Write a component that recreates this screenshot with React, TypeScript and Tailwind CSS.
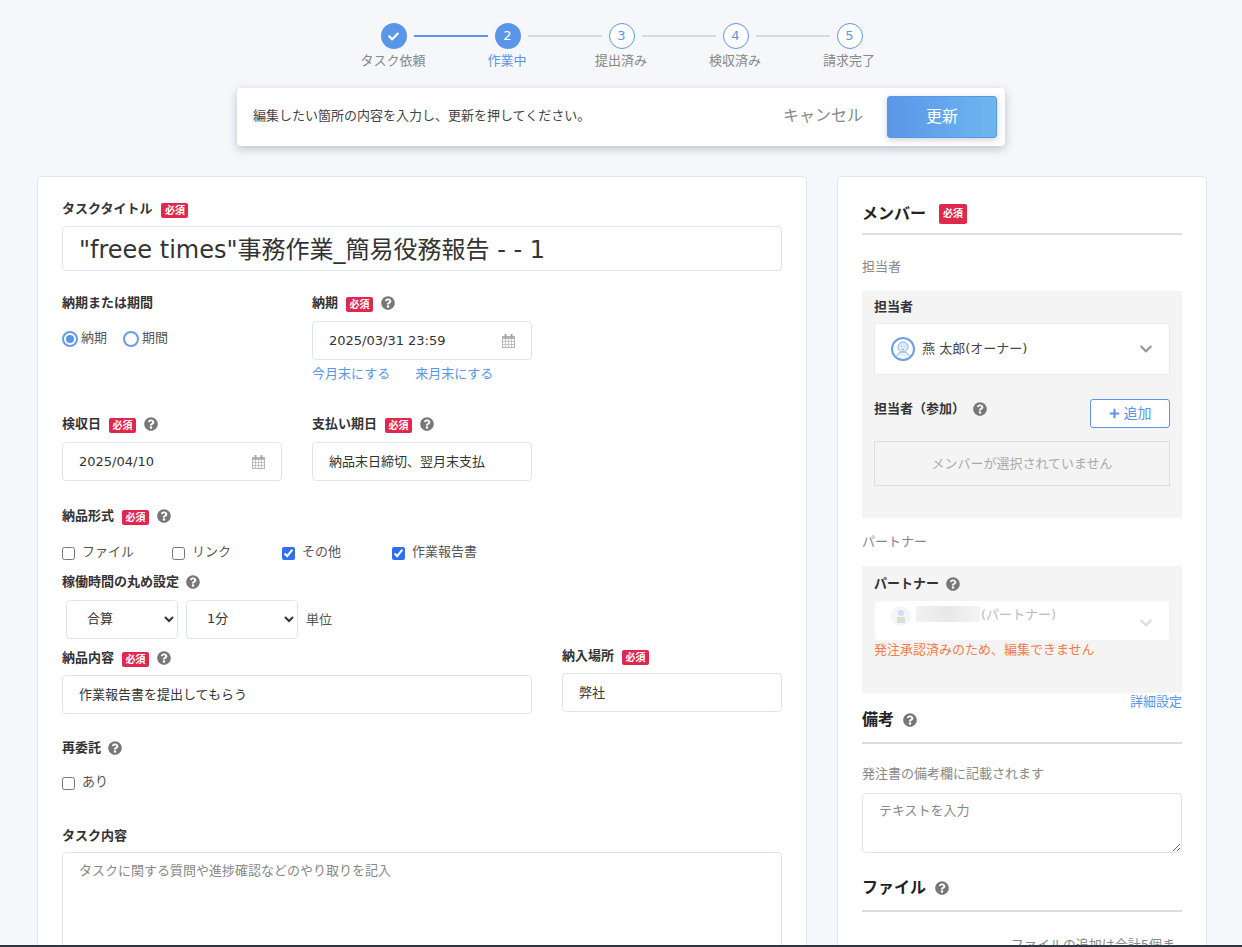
import type { ReactNode } from 'react';
import { FaCheck, FaChevronDown, FaPlus, FaQuestionCircle } from 'react-icons/fa';

const STEPS = ['タスク依頼', '作業中', '提出済み', '検収済み', '請求完了'];

function Help({ className = 'ml-2' }: { className?: string }) {
  return <FaQuestionCircle className={`shrink-0 text-[14px] text-[#777] ${className}`} />;
}

function Required({ large = false, className = 'ml-2' }: { large?: boolean; className?: string }) {
  return (
    <span
      className={
        large
          ? 'ml-[13px] flex h-5 w-7 items-center justify-center rounded-[2px] bg-[#e0284f] text-[10px] font-bold text-white'
          : `mt-[3px] flex h-[15px] w-[27px] items-center justify-center rounded-[2px] bg-[#e0284f] text-[10px] font-bold text-white ${className}`
      }
    >
      必須
    </span>
  );
}

function Label({ children, className = '' }: { children: ReactNode; className?: string }) {
  return (
    <div className={`flex h-5 items-center text-[13px] font-bold text-[#333] ${className}`}>
      {children}
    </div>
  );
}

function CalendarIcon() {
  return (
    <svg width="13" height="14" viewBox="0 0 13 14" className="shrink-0">
      <rect x="0.5" y="2.5" width="12" height="11" fill="#fff" stroke="#b5b5b5" />
      <rect x="0" y="2" width="13" height="3" fill="#b5b5b5" />
      <rect x="2.5" y="0" width="2" height="4" fill="#a8a8a8" />
      <rect x="8.5" y="0" width="2" height="4" fill="#a8a8a8" />
      <path d="M3.5 5v8M6.5 5v8M9.5 5v8M1 7.5h11M1 10.5h11" stroke="#c4c4c4" strokeWidth="1" />
    </svg>
  );
}

function Field({
  value,
  calendar = false,
  className = '',
}: {
  value: string;
  calendar?: boolean;
  className?: string;
}) {
  return (
    <div
      className={`flex h-[39px] items-center justify-between rounded-[4px] border border-[#dfe6ea] bg-white pl-4 pr-4 text-[13px] text-[#333] ${className}`}
    >
      <span>{value}</span>
      {calendar && <CalendarIcon />}
    </div>
  );
}

function Check({ label, checked = false, className = '' }: { label: string; checked?: boolean; className?: string }) {
  return (
    <label className={`flex items-center text-[13px] text-[#555] ${className}`}>
      <input type="checkbox" defaultChecked={checked} className="mt-[2px] h-[13px] w-[13px] accent-[#2f6fed]" />
      <span className="ml-[7px] -mt-[1px]">{label}</span>
    </label>
  );
}

function Radio({ label, checked = false }: { label: string; checked?: boolean }) {
  return (
    <div className="flex items-center text-[13px] text-[#555]">
      <span className="flex h-4 w-4 items-center justify-center rounded-full border-2 border-[#6b9be8] bg-white">
        {checked && <span className="h-2 w-2 rounded-full bg-[#5a96e8]" />}
      </span>
      <span className="ml-[3px] -mt-[3px]">{label}</span>
    </div>
  );
}

function NativeSelect({ value, options }: { value: string; options: string[] }) {
  return (
    <select
      defaultValue={value}
      className="h-[39px] w-[112px] rounded-[4px] border border-[#dfe6ea] bg-white pb-[2px] pl-4 pr-1 text-[13px] text-[#333]"
    >
      {options.map((o) => (
        <option key={o}>{o}</option>
      ))}
    </select>
  );
}

function Heading({ children, tall = false }: { children: ReactNode; tall?: boolean }) {
  return (
    <div
      className={`flex items-center border-b-2 border-[#ddd] text-[16px] font-bold text-[#222] ${
        tall ? 'h-[41px] pb-[5px]' : 'h-[39px] pb-[2px]'
      }`}
    >
      {children}
    </div>
  );
}

function OwnerAvatar() {
  return (
    <svg width="24" height="24" viewBox="0 0 24 24" className="shrink-0">
      <circle cx="12" cy="12" r="11" fill="#fff" stroke="#6a9fe8" strokeWidth="2" />
      <circle cx="12" cy="10" r="5" fill="#dfeafb" stroke="#8fb4ea" strokeWidth="1" />
      <path d="M5.5 19c1.5-3 4-4 6.500-4s5 1 6.500 4" fill="#e6effb" stroke="#8fb4ea" strokeWidth="1" />
      <path d="M10 9.500h.5M13.500 9.500h.5M11 12.500h2" stroke="#6f8fc0" strokeWidth="0.8" />
    </svg>
  );
}

function PartnerAvatar() {
  return (
    <svg width="20" height="20" viewBox="0 0 20 20" className="shrink-0">
      <circle cx="10" cy="10" r="10" fill="#f3f5f9" />
      <circle cx="10" cy="7" r="3" fill="#cfdcf3" />
      <rect x="6" y="11" width="8" height="6" rx="1" fill="#e7dcb8" />
      <rect x="6" y="15" width="8" height="2" fill="#cfdcf3" />
    </svg>
  );
}

function Stepper() {
  return (
    <div className="flex flex-col items-center pt-[23px]">
      <div className="ml-[1px] flex items-center">
        {STEPS.map((_, i) => (
          <div key={i} className="flex items-center">
            {i > 0 && (
              <span className={`mx-[7px] h-[2px] w-[74px] ${i === 1 ? 'bg-[#5a96e8]' : 'bg-[#d9d9d9]'}`} />
            )}
            {i === 0 && (
              <span className="flex h-[26px] w-[26px] items-center justify-center rounded-full bg-[#5a96e8] text-[11px] text-white">
                <FaCheck />
              </span>
            )}
            {i === 1 && (
              <span className="flex h-[26px] w-[26px] items-center justify-center rounded-full bg-[#5a96e8] text-[13px] text-white">
                2
              </span>
            )}
            {i > 1 && (
              <span className="flex h-[26px] w-[26px] items-center justify-center rounded-full border border-[#5a96e8] bg-white text-[13px] text-[#5a96e8]">
                {i + 1}
              </span>
            )}
          </div>
        ))}
      </div>
      <div className="mt-[2px] flex">
        {STEPS.map((s, i) => (
          <div
            key={s}
            className={`w-[114px] text-center text-[13px] leading-5 ${i === 1 ? 'text-[#5a96e8]' : 'text-[#888]'}`}
          >
            {s}
          </div>
        ))}
      </div>
    </div>
  );
}

function NoticeBar() {
  return (
    <div className="mx-auto mt-[17px] flex h-[58px] w-[768px] items-center rounded-[4px] bg-white pl-4 pr-2 shadow-[0_3px_10px_rgba(60,70,90,0.3)]">
      <p className="-mt-[2px] flex-1 text-[13px] text-[#444]">編集したい箇所の内容を入力し、更新を押してください。</p>
      <span className="-mt-[3px] mr-6 text-[16px] text-[#888]">キャンセル</span>
      <button className="h-[42px] w-[110px] rounded-[3px] border border-[#5a96e8] bg-gradient-to-r from-[#5a96e8] to-[#6fb6ef] pb-[1px] text-[16px] text-white shadow-[0_2px_6px_rgba(60,70,90,0.25)]">
        更新
      </button>
    </div>
  );
}

function TaskForm() {
  return (
    <section className="w-[770px] rounded-[4px] border border-[#e2e5ea] bg-white px-6 pt-[22px] pb-10">
      <Label>
        タスクタイトル
        <Required className="ml-[9px]" />
      </Label>
      <input
        readOnly
        value={'"freee times"事務作業_簡易役務報告 - - 1'}
        className="mt-[7px] h-[45px] w-full rounded-[4px] border border-[#dfe6ea] px-4 pb-[3px] text-[24px] text-[#333]"
      />

      <div className="mt-[22px] flex">
        <div className="w-[250px]">
          <Label>納期または期間</Label>
          <div className="mt-[18px] flex gap-4">
            <Radio label="納期" checked />
            <Radio label="期間" />
          </div>
        </div>
        <div className="w-[220px]">
          <Label>
            納期
            <Required />
            <Help />
          </Label>
          <Field value="2025/03/31 23:59" calendar className="mt-2" />
          <div className="mt-1 flex h-5 items-center gap-[25px] text-[13px] text-[#5a96e8]">
            <span>今月末にする</span>
            <span>来月末にする</span>
          </div>
        </div>
      </div>

      <div className="mt-[30px] flex gap-[30px]">
        <div className="w-[220px]">
          <Label>
            検収日
            <Required />
            <Help />
          </Label>
          <Field value="2025/04/10" calendar className="mt-2" />
        </div>
        <div className="w-[220px]">
          <Label>
            支払い期日
            <Required />
            <Help />
          </Label>
          <Field value="納品末日締切、翌月末支払" className="mt-2" />
        </div>
      </div>

      <Label className="mt-[25px]">
        納品形式
        <Required />
        <Help />
      </Label>
      <div className="mt-4 flex h-5 items-center">
        <Check label="ファイル" className="w-[110px]" />
        <Check label="リンク" className="w-[110px]" />
        <Check label="その他" checked className="w-[110px]" />
        <Check label="作業報告書" checked />
      </div>
      <Label className="mt-[10px]">
        稼働時間の丸め設定
        <Help className="ml-[7px]" />
      </Label>
      <div className="ml-1 mt-2 flex items-center gap-2 text-[13px] text-[#555]">
        <NativeSelect value="合算" options={['合算']} />
        <NativeSelect value="1分" options={['1分']} />
        <span>単位</span>
      </div>

      <div className="mt-[9px] flex items-start gap-[30px]">
        <div className="w-[470px]">
          <Label>
            納品内容
            <Required />
            <Help />
          </Label>
          <Field value="作業報告書を提出してもらう" className="mt-[7px]" />
        </div>
        <div className="-mt-[2px] w-[220px]">
          <Label>
            納入場所
            <Required />
          </Label>
          <Field value="弊社" className="mt-[7px]" />
        </div>
      </div>

      <Label className="mt-6">
        再委託
        <Help className="ml-[7px]" />
      </Label>
      <Check label="あり" className="mt-[14px] h-5" />

      <Label className="mt-[34px]">タスク内容</Label>
      <textarea
        placeholder="タスクに関する質問や進捗確認などのやり取りを記入"
        className="mt-[6px] block h-[200px] w-full rounded-[4px] border border-[#dfe6ea] px-4 py-[8px] text-[13px] placeholder:text-[#888]"
      />
    </section>
  );
}

function MemberPanel() {
  return (
    <aside className="w-[370px] rounded-[4px] border border-[#e2e5ea] bg-white px-6 pt-[19px] pb-10">
      <Heading>
        メンバー
        <Required large />
      </Heading>
      <p className="mt-[22px] h-5 text-[13px] leading-5 text-[#888]">担当者</p>

      <div className="mt-[14px] h-[227px] bg-[#f4f4f4] px-3 pt-[6px]">
        <Label>担当者</Label>
        <div className="mt-[6px] flex h-[52px] items-center rounded-[3px] border border-[#ebebeb] bg-white pl-4 pr-4 text-[13px] text-[#444]">
          <OwnerAvatar />
          <span className="ml-[7px] flex-1">燕 太郎(オーナー)</span>
          <FaChevronDown className="text-[14px] text-[#999]" />
        </div>
        <div className="mt-6 flex items-start justify-between">
          <Label>
            担当者（参加）
            <Help />
          </Label>
          <button className="flex h-[29px] w-20 items-center justify-center gap-1 rounded-[3px] border border-[#5a96e8] bg-white text-[14px] text-[#5a96e8]">
            <FaPlus className="text-[11px]" />
            追加
          </button>
        </div>
        <div className="mt-[13px] flex h-[45px] items-center justify-center border border-[#ddd] text-[13px] text-[#aaa]">
          メンバーが選択されていません
        </div>
      </div>

      <p className="mt-[14px] h-5 text-[13px] leading-5 text-[#888]">パートナー</p>
      <div className="mt-[14px] h-[127px] bg-[#f4f4f4] px-[13px] pt-[8px]">
        <Label className="-ml-px">
          パートナー
          <Help className="ml-[7px]" />
        </Label>
        <div className="mt-[7px] flex h-[39px] items-start rounded-[3px] bg-white pl-4 pr-4 pt-[5px] text-[13px] text-[#bbb]">
          <PartnerAvatar />
          <span className="ml-[5px] h-4 w-[64px] bg-gradient-to-r from-[#f2f2f2] via-[#e8e8e8] to-[#f4f4f4]" />
          <span className="ml-[1px] flex-1 leading-[18px]">(パートナー)</span>
          <FaChevronDown className="mt-[10px] text-[14px] text-[#ddd]" />
        </div>
        <p className="-ml-px text-[13px] leading-5 text-[#f47c4a]">発注承認済みのため、編集できません</p>
      </div>
      <p className="mt-px text-right text-[13px] leading-4 text-[#5a96e8]">詳細設定</p>

      <div className="-mt-[7px]">
        <Heading tall>
          備考
          <Help className="ml-[9px]" />
        </Heading>
      </div>
      <p className="mt-[20px] h-5 text-[13px] leading-5 text-[#888]">発注書の備考欄に記載されます</p>
      <textarea
        placeholder="テキストを入力"
        className="mt-[9px] block h-[60px] w-full rounded-[4px] border border-[#dfe6ea] px-4 py-[7px] text-[13px] placeholder:text-[#888]"
      />

      <div className="mt-[18px]">
        <Heading tall>
          ファイル
          <Help className="ml-[9px]" />
        </Heading>
      </div>
      <p className="mt-[23px] pr-[7px] text-right text-[13px] leading-5 text-[#888]">ファイルの追加は合計5個ま</p>
    </aside>
  );
}

export default function App() {
  return (
    <div className="flex h-[947px] w-[1242px] flex-col overflow-hidden bg-[#f5f7fb] font-['DejaVu_Sans','Noto_Sans_CJK_JP',sans-serif]">
      <main className="min-h-0 flex-1 overflow-hidden">
        <Stepper />
        <NoticeBar />
        <div className="ml-[37px] mt-[30px] flex items-start gap-[30px]">
          <TaskForm />
          <MemberPanel />
        </div>
      </main>
      <div className="h-[2px] shrink-0 bg-[#2f3640]" />
    </div>
  );
}
